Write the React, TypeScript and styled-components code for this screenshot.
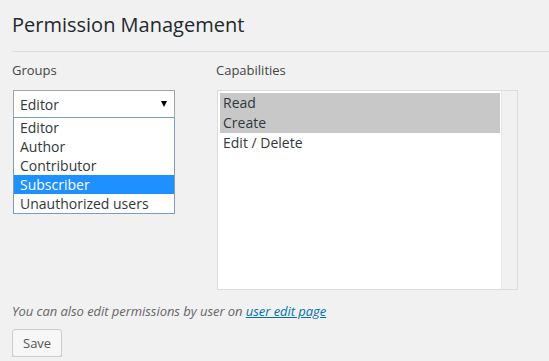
import React from 'react';
import styled, { createGlobalStyle } from 'styled-components';

const GlobalStyle = createGlobalStyle`
  html, body {
    margin: 0;
    padding: 0;
    background: #f1f1f1;
  }
  body {
    font-family: 'Open Sans', 'Liberation Sans', sans-serif;
    font-size: 13px;
    color: #444;
  }
`;

const Wrap = styled.div`
  padding: 10px 0 0 12px;
`;

const Title = styled.h1`
  margin: 0;
  padding: 0 0 12px;
  font-size: 20px;
  font-weight: 400;
  line-height: 29px;
  color: #23282d;
  border-bottom: 1px solid #dcdcdc;
`;

const Columns = styled.div`
  display: flex;
  padding-top: 9px;
`;

const Column = styled.div<{ $width?: number }>`
  display: flex;
  flex-direction: column;
  width: ${(p) => (p.$width ? `${p.$width}px` : 'auto')};
`;

const Label = styled.div`
  font-size: 13px;
  line-height: 18px;
  color: #444;
  margin-bottom: 11px;
`;

const SelectBox = styled.div`
  box-sizing: border-box;
  margin-left: 1px;
  width: 162px;
  height: 28px;
  border: 1px solid #a5a5a5;
  background: #fff;
  display: flex;
  align-items: center;
  justify-content: space-between;
  padding: 0 7px 0 6px;
  font-size: 14px;
  color: #32373c;
`;

const Arrow = styled.span`
  width: 0;
  height: 0;
  border-left: 3.5px solid transparent;
  border-right: 3.5px solid transparent;
  border-top: 6px solid #000;
`;

const DropList = styled.ul`
  box-sizing: border-box;
  margin: -1px 0 0 1px;
  padding: 0;
  list-style: none;
  width: 162px;
  border: 1px solid #7f9db9;
  background: #fff;
`;

const DropItem = styled.li<{ $active?: boolean }>`
  height: 19px;
  line-height: 19px;
  padding: 0 6px;
  font-size: 14px;
  color: ${(p) => (p.$active ? '#fff' : '#32373c')};
  background: ${(p) => (p.$active ? '#1e90ff' : 'transparent')};
  white-space: nowrap;
`;

const ListBox = styled.div`
  box-sizing: border-box;
  margin-left: 1px;
  width: 301px;
  height: 200px;
  border: 1px solid #dcdcdc;
  background: #fff;
  display: flex;
`;

const Options = styled.div`
  flex: 1;
  padding: 2px 1px 0 2px;
`;

const Option = styled.div<{ $selected?: boolean }>`
  height: 20px;
  line-height: 20px;
  padding: 0 3px;
  font-size: 14px;
  color: #32373c;
  background: ${(p) => (p.$selected ? '#c8c8c8' : 'transparent')};
`;

const ScrollTrack = styled.div`
  width: 15px;
  background: #f1f1f1;
  border-left: 1px solid #e6e6e6;
`;

const Note = styled.p`
  margin: 12px 0 0;
  font-style: italic;
  font-size: 13px;
  line-height: 18px;
  letter-spacing: -0.05px;
  color: #666;
`;

const NoteLink = styled.a`
  color: #0073aa;
  text-decoration: underline;
`;

const Button = styled.button`
  margin-top: 9px;
  height: 28px;
  padding: 0 10px 1px;
  font-family: inherit;
  font-size: 13px;
  color: #555;
  background: #f7f7f7;
  border: 1px solid #ccc;
  border-radius: 3px;
  box-shadow: 0 1px 0 #ccc;
  cursor: pointer;
`;

const groups = ['Editor', 'Author', 'Contributor', 'Subscriber', 'Unauthorized users'];
const capabilities = [
  { name: 'Read', selected: true },
  { name: 'Create', selected: true },
  { name: 'Edit / Delete', selected: false },
];

export default function App() {
  return (
    <Wrap>
      <GlobalStyle />
      <Title>Permission Management</Title>
      <Columns>
        <Column $width={204}>
          <Label>Groups</Label>
          <SelectBox>
            <span>Editor</span>
            <Arrow />
          </SelectBox>
          <DropList>
            {groups.map((g) => (
              <DropItem key={g} $active={g === 'Subscriber'}>
                {g}
              </DropItem>
            ))}
          </DropList>
        </Column>
        <Column>
          <Label>Capabilities</Label>
          <ListBox>
            <Options>
              {capabilities.map((c) => (
                <Option key={c.name} $selected={c.selected}>
                  {c.name}
                </Option>
              ))}
            </Options>
            <ScrollTrack />
          </ListBox>
        </Column>
      </Columns>
      <Note>
        You can also edit permissions by user on <NoteLink href="#">user edit page</NoteLink>
      </Note>
      <Button>Save</Button>
    </Wrap>
  );
}
